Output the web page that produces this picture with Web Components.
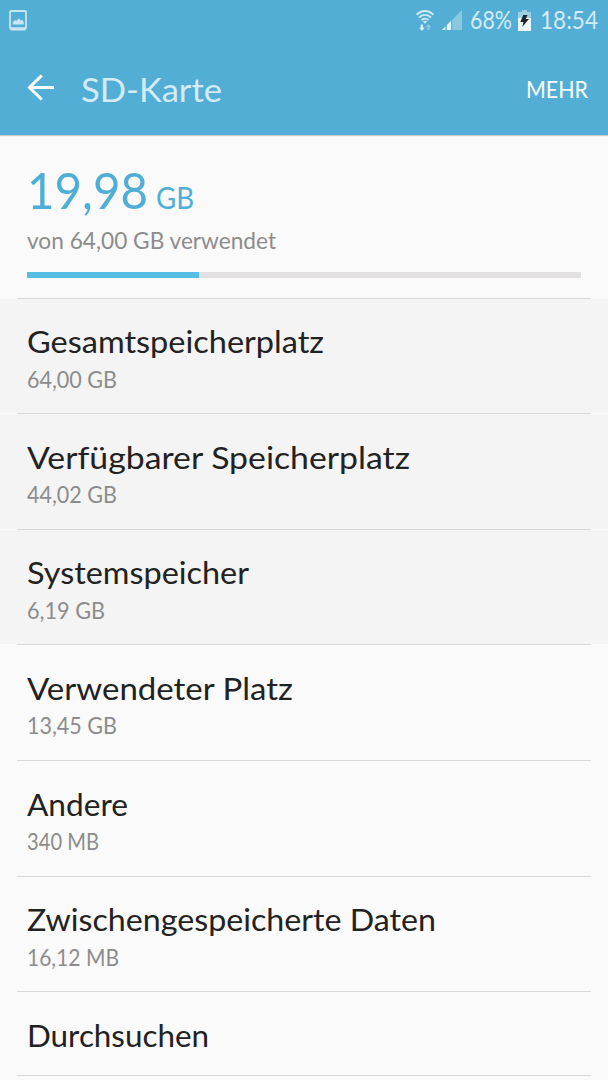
<!DOCTYPE html>
<html lang="de">
<head>
<meta charset="utf-8">
<title>SD-Karte</title>
<style>

body {
    margin: 0;
    background: #fafafa;
    font-family: Lato, "Open Sans", sans-serif;
}

</style>
</head>
<body>

<storage-screen></storage-screen>

<template id="tpl-fit-text">
    <style>

:host { display: block; flex: none; white-space: nowrap; }
span { display: inline-block; transform-origin: 0 50%; }

    </style>
    <span><slot></slot></span>
</template>

<template id="tpl-status-bar">
    <style>

:host {
    display: flex;
    align-items: center;
    box-sizing: border-box;
    height: 40px;
    padding: 0 10px 0 9px;
    color: #d3ebf5;
    font-size: 24.5px;
    line-height: 42px;
}

svg { display: block; flex: none; }
.space { flex: 1; }
.wifi { margin-right: 8px; }
.signal { margin-right: 8px; }
.battery { margin: 0 9px 0 6px; }

    </style>
    <svg width="18" height="21" viewBox="0 0 18 21">
        <rect x="1" y="1" width="16" height="17.5" rx="1" fill="none" stroke="#c7e6f2" stroke-width="1.8"/>
        <path d="M1 17.5h16v2l-1 1H2l-1-1z" fill="#c7e6f2"/>
        <path d="M3.8 14.6V12l2-2 1.6 1 2.5-2.7 2 2.5 1.2-1 1.6 2.2v2.6z" fill="#c7e6f2"/>
    </svg>
    <div class="space"></div>
    <svg class="wifi" width="18" height="21" viewBox="0 0 18 21">
        <g fill="none" stroke="#d3ebf5" stroke-width="1.9">
            <path d="M.6 4.800C5.300-.3 12.700-.3 17.400 4.800"/>
            <path d="M3.100 7.500c3.300-3.500 8.500-3.500 11.800 0"/>
            <path d="M5.600 10.100c2-2 4.800-2 6.800 0"/>
        </g>
        <path d="M6.800 11.500q2.200-1.500 4.400 0L9 13.800z" fill="#d3ebf5"/>
        <path d="M4.800 14.500h2.200v3.200h1.700l-2.800 3.300-2.800-3.300h1.700z" fill="#e4f3f9"/>
        <path d="M11.400 20h2.200v-2.700h1.700L12.500 14l-2.800 3.300h1.700z" fill="#8dcae1"/>
    </svg>
    <svg class="signal" width="20" height="20" viewBox="0 0 20 20">
        <path d="M0 20L20 0v20z" fill="#8ac8e0"/>
        <path d="M0 20l3.500-3.500V20zM4.700 20v-4.700L9 11v9z" fill="#e4f3f9"/>
        <path d="M3.700 16v4h1v-5zM9.300 11v9h1V9.800z" fill="#53aed5"/>
    </svg>
    <fit-text width="42">68%</fit-text>
    <svg class="battery" width="13" height="21" viewBox="0 0 13 21">
        <path d="M4 0h5v2h4v7H0V2h4z" fill="#9bd0e5"/>
        <path d="M0 8h13v13H0z" fill="#edf6fa"/>
        <path d="M5.300 5h4.200L7.700 9h3.200l-6.600 8 1.200-5H2.300z" fill="#202527"/>
    </svg>
    <fit-text width="58">18:54</fit-text>
</template>

<template id="tpl-app-bar">
    <style>

:host {
    display: flex;
    align-items: center;
    box-sizing: border-box;
    height: 95px;
    padding: 0 20px 0 27px;
}

svg { display: block; margin: 0 26px 0 0; }
.title { margin-top: 4px; color: #d3ebf5; font-size: 32px; line-height: 40px; }
.more { margin: 2px 0 0 auto; color: #fff; font-size: 24px; line-height: 30px; }

    </style>
    <svg width="28" height="27" viewBox="0 0 28 27" fill="none" stroke="#fff" stroke-width="3">
        <path d="M27 13.500H2.500M14.700 1.500L2.500 13.500l12.200 12"/>
    </svg>
    <fit-text class="title" width="141"><slot></slot></fit-text>
    <fit-text class="more" width="62">MEHR</fit-text>
</template>

<template id="tpl-usage-summary">
    <style>

:host {
    display: block;
    box-sizing: border-box;
    height: 162.7px;
    padding: 25px 27px 0;
}

.amount {
    display: flex;
    align-items: baseline;
    gap: 8px;
    color: #4faed5;
    font-size: 51px;
    line-height: 60px;
}

.unit { font-size: 30px; }
.total { color: #8c8c8c; font-size: 22.5px; line-height: 28px; }
.bar { height: 6px; margin-top: 17px; background: #e2e0e1; }
.fill { width: 172px; height: 100%; background: #55bce3; }

    </style>
    <div class="amount">
        <fit-text width="121"><slot name="amount"></slot></fit-text>
        <fit-text class="unit" width="38"><slot name="unit"></slot></fit-text>
    </div>
    <fit-text class="total" width="249"><slot name="total"></slot></fit-text>
    <div class="bar"><div class="fill"></div></div>
</template>

<template id="tpl-storage-row">
    <style>

:host {
    display: block;
    box-sizing: border-box;
    height: 115.6px;
    padding-top: 24.5px;
}

:host([shaded]) { background: #f4f4f4; }
:host([single]) { height: 84px; }

.line {
    height: 1px;
    margin: -24.5px 0 24.5px;
    padding: 0 17px;
    background: #fafafa;
}

.line::before { content: ""; display: block; height: 1px; background: #d9d9d9; }
.text { padding-left: 27px; }
.title { color: #222; font-size: 30px; line-height: 36px; }
.value { margin-top: 6.5px; color: #8c8c8c; font-size: 22.5px; line-height: 28px; }

    </style>
    <div class="line"></div>
    <div class="text">
        <fit-text class="title"><slot></slot></fit-text>
        <fit-text class="value"><slot name="value"></slot></fit-text>
    </div>
</template>

<template id="tpl-storage-screen">
    <style>

:host {
    display: flex;
    flex-direction: column;
    width: 608px;
    height: 1080px;
    overflow: hidden;
    background: #fafafa;
}

header { background: #53aed5; box-shadow: 0 1px 1px rgba(0,0,0,0.2); }
storage-row, usage-summary { flex: none; }

    </style>
    <header>
        <status-bar></status-bar>
        <app-bar>SD-Karte</app-bar>
    </header>
    <usage-summary>
        <span slot="amount">19,98</span>
        <span slot="unit">GB</span>
        <span slot="total">von 64,00 GB verwendet</span>
    </usage-summary>
    <storage-row shaded title-width="297" value-width="90">Gesamtspeicherplatz<span slot="value">64,00 GB</span></storage-row>
    <storage-row shaded title-width="383" value-width="90">Verfügbarer Speicherplatz<span slot="value">44,02 GB</span></storage-row>
    <storage-row shaded title-width="222" value-width="78">Systemspeicher<span slot="value">6,19 GB</span></storage-row>
    <storage-row title-width="266" value-width="90">Verwendeter Platz<span slot="value">13,45 GB</span></storage-row>
    <storage-row title-width="101" value-width="72">Andere<span slot="value">340 MB</span></storage-row>
    <storage-row title-width="409" value-width="92">Zwischengespeicherte Daten<span slot="value">16,12 MB</span></storage-row>
    <storage-row single title-width="182">Durchsuchen</storage-row>
    <storage-row single></storage-row>
</template>

<script>

'use strict';

class BaseElement extends HTMLElement {

    constructor () {
        super();

        const tpl = document.getElementById('tpl-' + this.localName);

        this._shadowRoot = this.attachShadow({mode: 'open'});
        this._shadowRoot.appendChild(tpl.content.cloneNode(true));
    }
}

customElements.define('storage-screen', class extends BaseElement {});
customElements.define('status-bar', class extends BaseElement {});
customElements.define('app-bar', class extends BaseElement {});
customElements.define('usage-summary', class extends BaseElement {});

customElements.define('storage-row', class extends BaseElement {

    connectedCallback () {
        for (const name of ['title', 'value']) {
            const width = this.getAttribute(name + '-width');
            if (width) {
                this._shadowRoot.querySelector('.' + name).setAttribute('width', width);
            }
        }
    }
});

// scales its text horizontally to fill the given width
customElements.define('fit-text', class extends BaseElement {

    static get observedAttributes () {
        return ['width'];
    }

    connectedCallback () {
        this.fit();
    }

    attributeChangedCallback () {
        this.fit();
    }

    fit () {
        const width = Number(this.getAttribute('width'));
        const span = this._shadowRoot.querySelector('span');

        if (!width || !span.offsetWidth) {
            return;
        }

        span.style.transform = 'none';
        this.style.width = width + 'px';
        span.style.transform = `scaleX(${width / span.getBoundingClientRect().width})`;
    }
});

</script>
</body>
</html>
